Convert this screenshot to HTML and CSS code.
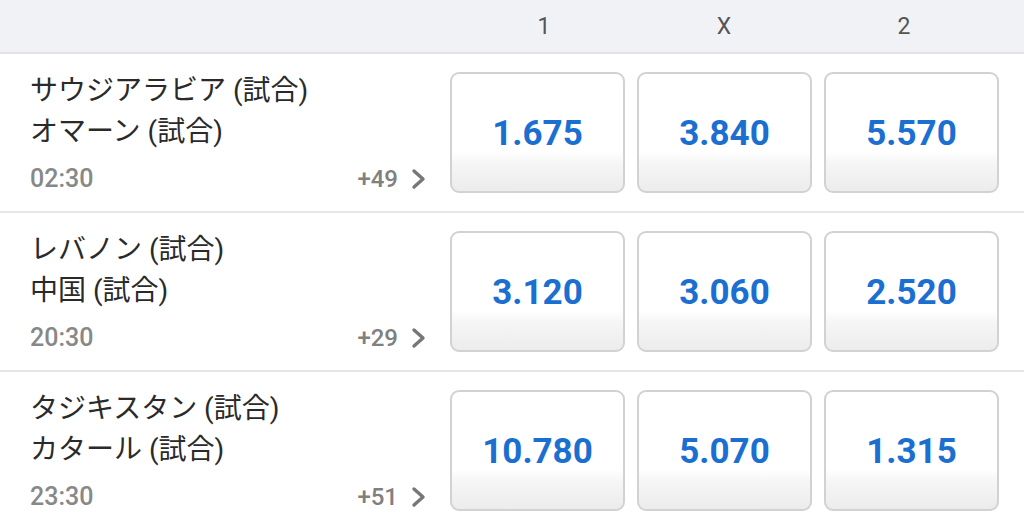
FILE: index.html
```html
<!DOCTYPE html>
<html>
<head>
	<meta charset="utf-8">
	<title>Odds</title>
	<link rel="stylesheet" href="styles.css">
</head>
<body>
	<div class="odds_head">
		<span>1</span>
		<span>X</span>
		<span>2</span>
	</div>

	<div class="match">
		<div class="info">
			<div class="team">サウジアラビア (試合)</div>
			<div class="team">オマーン (試合)</div>
			<div class="meta">
				<span class="time">02:30</span>
				<span class="more">+49
					<svg width="16" height="22" viewBox="0 0 16 22"><polyline points="3,3 12,11 3,19" /></svg>
				</span>
			</div>
		</div>
		<div class="prices">
			<button class="price">1.675</button>
			<button class="price">3.840</button>
			<button class="price">5.570</button>
		</div>
	</div>

	<div class="match">
		<div class="info">
			<div class="team">レバノン (試合)</div>
			<div class="team">中国 (試合)</div>
			<div class="meta">
				<span class="time">20:30</span>
				<span class="more">+29
					<svg width="16" height="22" viewBox="0 0 16 22"><polyline points="3,3 12,11 3,19" /></svg>
				</span>
			</div>
		</div>
		<div class="prices">
			<button class="price">3.120</button>
			<button class="price">3.060</button>
			<button class="price">2.520</button>
		</div>
	</div>

	<div class="match">
		<div class="info">
			<div class="team">タジキスタン (試合)</div>
			<div class="team">カタール (試合)</div>
			<div class="meta">
				<span class="time">23:30</span>
				<span class="more">+51
					<svg width="16" height="22" viewBox="0 0 16 22"><polyline points="3,3 12,11 3,19" /></svg>
				</span>
			</div>
		</div>
		<div class="prices">
			<button class="price">10.780</button>
			<button class="price">5.070</button>
			<button class="price">1.315</button>
		</div>
	</div>
</body>
</html>
```

FILE: styles.css
```css
body {
	margin: 0;
	background-color: #fff;
	font-family: Roboto, "Noto Sans CJK JP", sans-serif;
	overflow: hidden;
}

.odds_head {
	display: grid;
	grid-template-columns: repeat(3, 180px);
	padding-left: 454px;
	height: 52px;
	align-items: center;
	background-color: #f1f2f5;
	border-bottom: 2px solid #e3e3e5;
	color: #555;
	font-size: 23px;
}

.odds_head span {
	text-align: center;
}

.match {
	display: flex;
	height: 159px;
	padding: 18px 24px 18px 30px;
	box-sizing: border-box;
	border-bottom: 2px solid #e6e6e6;
}

.info {
	width: 397px;
	display: flex;
	flex-direction: column;
	color: #2a2a2a;
}

.team {
	font-size: 28px;
	line-height: 41px;
}

.team:first-child {
	margin-top: -2px;
}

.meta {
	display: flex;
	justify-content: space-between;
	align-items: center;
	margin-top: 12px;
	color: #888;
	font-size: 25px;
	font-weight: 500;
}

.more {
	display: flex;
	align-items: center;
	gap: 13px;
	font-size: 24px;
	color: #808080;
}

.more svg polyline {
	fill: none;
	stroke: #777;
	stroke-width: 3.4;
	stroke-linecap: round;
	stroke-linejoin: round;
}

.prices {
	margin-left: 23px;
	display: grid;
	grid-template-columns: repeat(3, 175px);
	gap: 12px;
}

.price {
	height: 121px;
	border: 2px solid #d2d2d2;
	border-radius: 9px;
	background: linear-gradient(to bottom, #fff 0%, #fff 66%, #f6f6f6 76%, #ececec 100%);
	color: #1a6fd0;
	font-family: Roboto, sans-serif;
	font-size: 35px;
	font-weight: 700;
	padding: 1px 0 0;
}
```
